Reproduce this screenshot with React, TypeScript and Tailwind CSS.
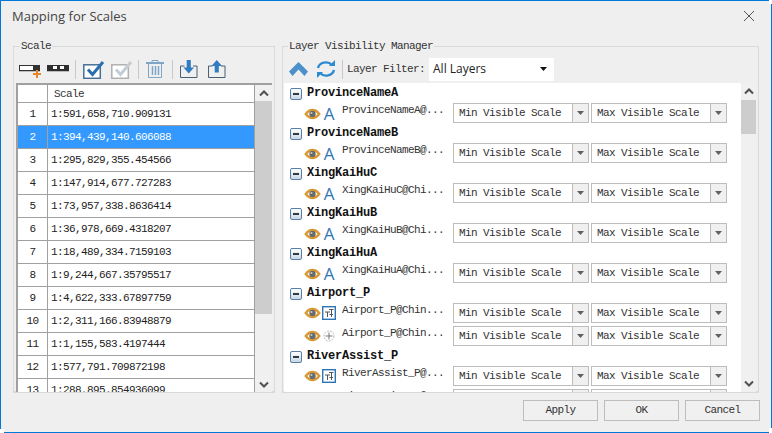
import React from "react";

const mono = "font-['Liberation_Mono',monospace]";

const scales = [
  "1:591,658,710.909131",
  "1:394,439,140.606088",
  "1:295,829,355.454566",
  "1:147,914,677.727283",
  "1:73,957,338.8636414",
  "1:36,978,669.4318207",
  "1:18,489,334.7159103",
  "1:9,244,667.35795517",
  "1:4,622,333.67897759",
  "1:2,311,166.83948879",
  "1:1,155,583.4197444",
  "1:577,791.709872198",
  "1:288,895.854936099",
];

type Kind = "text" | "point" | "label";
const groups: { name: string; items: { label: string; kind: Kind }[] }[] = [
  { name: "ProvinceNameA", items: [{ label: "ProvinceNameA@...", kind: "text" }] },
  { name: "ProvinceNameB", items: [{ label: "ProvinceNameB@...", kind: "text" }] },
  { name: "XingKaiHuC", items: [{ label: "XingKaiHuC@Chi...", kind: "text" }] },
  { name: "XingKaiHuB", items: [{ label: "XingKaiHuB@Chi...", kind: "text" }] },
  { name: "XingKaiHuA", items: [{ label: "XingKaiHuA@Chi...", kind: "text" }] },
  {
    name: "Airport_P",
    items: [
      { label: "Airport_P@Chin...", kind: "label" },
      { label: "Airport_P@Chin...", kind: "point" },
    ],
  },
  {
    name: "RiverAssist_P",
    items: [
      { label: "RiverAssist_P@...", kind: "label" },
      { label: "RiverAssist_P@...", kind: "text" },
    ],
  },
];

function Chevron({ down }: { down?: boolean }) {
  return (
    <svg width="10" height="7" viewBox="0 0 10 7" className="text-[#505050]">
      <path d={down ? "M1 1.5 5 5.5 9 1.5" : "M1 5.5 5 1.5 9 5.5"} fill="none" stroke="currentColor" strokeWidth="2" />
    </svg>
  );
}

function Caret({ color = "#606060" }: { color?: string }) {
  return (
    <svg width="7" height="4" viewBox="0 0 7 4">
      <path d="M0 0h7L3.500 4z" fill={color} />
    </svg>
  );
}

function Sep() {
  return <div className="h-[19px] w-px bg-[#c8c8c8]" />;
}

function AddScaleIcon() {
  return (
    <svg width="24" height="14" viewBox="0 0 24 14">
      <rect x="0" y="0" width="21" height="6" fill="#333" />
      <rect x="1" y="1" width="13" height="4" fill="#fff" />
      <rect x="0" y="6" width="21" height="1" fill="#bbb" />
      <path d="M18 5v8M14 9h8" stroke="#e8862a" strokeWidth="2" />
    </svg>
  );
}

function DelScaleIcon() {
  return (
    <svg width="23" height="7" viewBox="0 0 23 7">
      <rect width="22" height="6" fill="#2e2e2e" />
      <rect x="6" y="1" width="4" height="3" fill="#fff" />
      <rect x="13" y="1" width="4" height="3" fill="#fff" />
      <rect y="6" width="22" height="1" fill="#bbb" />
    </svg>
  );
}

function CheckIcon({ frame, tick }: { frame: string; tick: string }) {
  return (
    <svg width="22" height="19" viewBox="0 0 22 19">
      <rect x=".8" y="4.800" width="16.500" height="13.500" fill="#fff" stroke={frame} strokeWidth="1.500" />
      <path d="M5 9.500l4.500 5L20 2" fill="none" stroke={tick} strokeWidth="3" />
    </svg>
  );
}

function TrashIcon() {
  return (
    <svg width="18" height="18" viewBox="0 0 18 18" fill="none" stroke="#7fa6c8">
      <path d="M0 3h18" strokeWidth="2" />
      <path d="M6 2V.5h6V2" />
      <path d="M2.500 4v13.500h13V4" />
      <path d="M6.500 6v9M9.500 6v9M12.500 6v9" strokeWidth="1.500" />
    </svg>
  );
}

function TrayIcon({ up }: { up?: boolean }) {
  return (
    <svg width="18" height="18" viewBox="0 0 18 18">
      <path d="M4.500 6H.5v11.500h16.500V6h-4" fill="none" stroke="#4a5e74" />
      {up ? (
        <path d="M8.750 0 14 6h-3.200v6.500H6.700V6H3.500z" fill="#2f7cc0" />
      ) : (
        <path d="M6.700 0h4.100v7.500H14L8.750 13.500 3.500 7.500h3.200z" fill="#2f7cc0" />
      )}
    </svg>
  );
}

function Eye() {
  return (
    <svg width="17" height="12" viewBox="0 0 17 12">
      <path d="M.2 6C3 2 5.600.8 8.500.8S14 2 16.800 6C14 10 11.400 11.200 8.500 11.200S3 10 .2 6z" fill="#d99a35" />
      <path d="M3.500 6C5 4.200 6.700 3.200 8.500 3.200S12 4.200 13.500 6C12 7.800 10.300 8.800 8.500 8.800S5 7.800 3.500 6z" fill="#fff" />
      <circle cx="8.500" cy="6" r="3.200" fill="#6a6a6a" />
      <circle cx="7.500" cy="5" r="1" fill="#c8c8c8" />
    </svg>
  );
}

function LayerIcon({ kind }: { kind: Kind }) {
  if (kind === "text") {
    return <span className="w-[14px] text-center font-['Open_Sans',sans-serif] text-[17px] leading-[16px] text-[#2e75b6]">A</span>;
  }
  if (kind === "label") {
    return (
      <svg width="14" height="14" viewBox="0 0 14 14" fill="none">
        <rect x=".7" y=".7" width="12.600" height="12.600" stroke="#2e75b6" strokeWidth="1.400" />
        <path d="M3 6h5M5.500 6v5M7 3.500h4.500M9.500 3.500V11M7.500 8.500H11" stroke="#555" />
      </svg>
    );
  }
  return (
    <svg width="14" height="14" viewBox="0 0 14 14" fill="none">
      <circle cx="7" cy="7" r="5" stroke="#bdbdbd" strokeDasharray="2 1" />
      <path d="M7 3.500v7M3.500 7h7" stroke="#777" />
    </svg>
  );
}

function MinusBox() {
  return (
    <div className="flex h-[12px] w-[12px] items-center justify-center rounded-[2px] border border-[#5a7fa5] bg-gradient-to-b from-white to-[#c9d6e3]">
      <div className="h-[2px] w-[6px] bg-[#303a44]" />
    </div>
  );
}

function Combo({ text }: { text: string }) {
  return (
    <div className="flex h-[20px] w-[136px] shrink-0 items-stretch border border-[#bcbcbc] bg-white">
      <span className={`flex-1 whitespace-nowrap pl-[5px] text-[11px] leading-[19px] tracking-[-0.6px] text-[#333] ${mono}`}>{text}</span>
      <span className="flex w-[16px] shrink-0 items-center justify-center border-l border-[#bcbcbc] bg-[#f0f0f0]">
        <Caret />
      </span>
    </div>
  );
}

function LayerRow({ label, kind }: { label: string; kind: Kind }) {
  return (
    <div className="flex h-[20px] shrink-0 items-start">
      <div className="ml-[20px] mt-[3px] flex w-[38px] items-center gap-[1px]">
        <Eye />
        <LayerIcon kind={kind} />
      </div>
      <span className={`w-[111px] whitespace-nowrap text-[11px] leading-[14px] tracking-[-0.6px] text-[#333] ${mono}`}>{label}</span>
      <Combo text="Min Visible Scale" />
      <div className="w-[2px]" />
      <Combo text="Max Visible Scale" />
    </div>
  );
}

function DialogButton({ label }: { label: string }) {
  return (
    <button className={`h-[21px] w-[75px] border border-[#bdbdbd] bg-[#f0f0f0] text-[11px] tracking-[-0.6px] text-[#333] ${mono}`}>
      {label}
    </button>
  );
}

export default function App() {
  return (
    <div className="relative flex h-[433px] w-[772px] flex-col border border-[#0078d7] bg-[#efefef] font-['Open_Sans',sans-serif]">
      {/* window shadow corners */}
      <div className="absolute -right-px -top-px h-[4px] w-[3px] bg-white" />
      <div className="absolute -bottom-px -right-px h-[5px] w-[3px] bg-white" />
      <div className="absolute -bottom-px -left-px h-[4px] w-[4px] bg-white" />

      <header className="flex h-[45px] shrink-0 items-start justify-between pl-[11px] pr-[16px] pt-[6px]">
        <span className="text-[13px] leading-[18px] text-[#444]">Mapping for Scales</span>
        <svg width="12" height="12" viewBox="0 0 12 12" className="mt-[3px]">
          <path d="M1 1l10 10M11 1 1 11" stroke="#555" strokeWidth="1" />
        </svg>
      </header>

      <div className="flex h-[347px] shrink-0 pl-[12px]">
        <section className="relative flex h-[347px] w-[262px] flex-col border border-b-2 border-[#d9d9d9] pl-[2px] pr-[2px]">
          <span className={`absolute -top-[8px] left-[6px] bg-[#efefef] px-px text-[11px] leading-[14px] tracking-[-0.6px] text-[#333] ${mono}`}>Scale</span>
          <div className="flex h-[36px] shrink-0 items-center pl-[3px] pt-[8px]">
            <div className="mt-[5px]"><AddScaleIcon /></div>
            <div className="ml-[4px] -mt-[2px]"><DelScaleIcon /></div>
            <div className="ml-[5px]"><Sep /></div>
            <div className="ml-[7px]"><CheckIcon frame="#4a6f94" tick="#2a6db0" /></div>
            <div className="ml-[6px]"><CheckIcon frame="#b0b0b0" tick="#c4ccd4" /></div>
            <div className="ml-[5px]"><Sep /></div>
            <div className="ml-[7px]"><TrashIcon /></div>
            <div className="ml-[8px]"><Sep /></div>
            <div className="ml-[7px]"><TrayIcon /></div>
            <div className="ml-[10px]"><TrayIcon up /></div>
          </div>
          <div className="flex h-[309px] border-l-2 border-t-2 border-[#a0a0a0] bg-white">
            <div className="w-[236px] overflow-hidden">
              <div className="flex h-[18px] border-b border-[#a0a0a0]">
                <div className="w-[30px] border-r border-[#a0a0a0]" />
                <div className={`pl-[6px] text-[11px] leading-[19px] tracking-[-0.6px] text-[#333] ${mono}`}>Scale</div>
              </div>
              {scales.map((s, i) => (
                <div key={s} className={`flex h-[23px] border-b border-[#a0a0a0] text-[11px] leading-[22px] ${i === 1 ? "bg-[#3399ff] text-white" : "text-[#222]"}`}>
                  <div className={`w-[30px] border-r border-[#a0a0a0] text-center tracking-[-0.6px] ${mono}`}>{i + 1}</div>
                  <div className={`pl-[3px] tracking-[-0.6px] ${mono}`}>{s}</div>
                </div>
              ))}
            </div>
            <div className="flex w-[18px] flex-col border-l border-[#a0a0a0] bg-[#f0f0f0]">
              <div className="flex h-[16px] items-center justify-center"><Chevron /></div>
              <div className="h-[213px] bg-[#cdcdcd]" />
              <div className="flex-1" />
              <div className="flex h-[16px] items-center justify-center"><Chevron down /></div>
            </div>
          </div>
        </section>

        <section className="relative ml-[7px] flex h-[347px] w-[477px] flex-col border border-b-2 border-[#d9d9d9] pl-[1px] pr-[1px]">
          <span className={`absolute -top-[8px] left-[5px] bg-[#efefef] px-px text-[11px] leading-[14px] tracking-[-0.6px] text-[#333] ${mono}`}>Layer Visibility Manager</span>
          <div className="flex h-[36px] shrink-0 items-center pl-[5px] pt-[8px]">
            <svg width="19" height="14" viewBox="0 0 19 14">
              <path d="M9.500 0 19 9.500 15.500 14 9.500 7.500 3.500 14 0 9.500z" fill="#4b8fcb" />
            </svg>
            <svg width="20" height="20" viewBox="0 0 20 20" className="ml-[8px]" fill="none" stroke="#2d8ad0" strokeWidth="2.400">
              <path d="M2 9a8 7 0 0 1 14-3" />
              <path d="M18 11a8 7 0 0 1-14 3" />
              <path d="M19 1v6h-6z" fill="#2d8ad0" stroke="none" />
              <path d="M1 19v-6h6z" fill="#2d8ad0" stroke="none" />
            </svg>
            <div className="ml-[6px]"><Sep /></div>
            <span className={`ml-[4px] text-[11px] tracking-[-0.6px] text-[#333] ${mono}`}>Layer Filter:</span>
            <div className="ml-[4px] flex h-[23px] w-[125px] items-center justify-between bg-white pl-[4px] pr-[7px] text-[12px] text-[#222]">
              All Layers
              <Caret color="#111" />
            </div>
          </div>
          <div className="flex h-[309px]">
            <div className="w-[457px] overflow-hidden bg-white">
              {groups.map((g) => (
                <div key={g.name} className="flex flex-col gap-[3px]">
                  <div className="-mb-[3px] flex h-[20px] shrink-0 items-center gap-[5px] pl-[6px] pt-[1px]">
                    <MinusBox />
                    <span className={`text-[12px] font-bold leading-[21px] tracking-[-0.2px] text-[#111] ${mono}`}>{g.name}</span>
                  </div>
                  {g.items.map((it, i) => (
                    <LayerRow key={i} label={it.label} kind={it.kind} />
                  ))}
                </div>
              ))}
            </div>
            <div className="flex w-[15px] flex-col bg-[#f0f0f0]">
              <div className="flex h-[17px] items-center justify-center"><Chevron /></div>
              <div className="h-[34px] bg-[#cdcdcd]" />
              <div className="flex-1" />
              <div className="flex h-[17px] items-center justify-center"><Chevron down /></div>
            </div>
          </div>
        </section>
      </div>

      <footer className="flex flex-1 items-start justify-end gap-[6px] pr-[11px] pt-[7px]">
        <DialogButton label="Apply" />
        <DialogButton label="OK" />
        <DialogButton label="Cancel" />
      </footer>
    </div>
  );
}
